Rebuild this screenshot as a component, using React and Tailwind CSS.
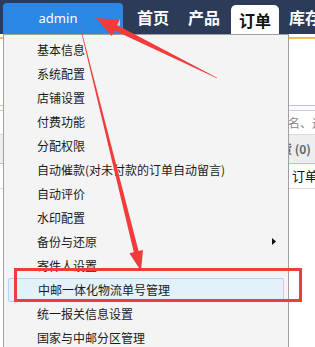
import React from "react";

const items = [
  "基本信息",
  "系统配置",
  "店铺设置",
  "付费功能",
  "分配权限",
  "自动催款(对未付款的订单自动留言)",
  "自动评价",
  "水印配置",
  "备份与还原",
  "寄件人设置",
  "中邮一体化物流单号管理",
  "统一报关信息设置",
  "国家与中邮分区管理",
];

const font = { fontFamily: '"Noto Sans CJK SC", "Noto Sans", sans-serif' };

export default function App() {
  return (
    <div className="relative w-[315px] h-[347px] overflow-hidden bg-white" style={font}>
      {/* top bar */}
      <div className="flex h-[34px] items-end overflow-hidden bg-[#2c3b58] pl-[3px]">
        <div className="relative flex h-[31px] w-[120px] shrink-0 items-center justify-center rounded-t-[4px] bg-[#2b88e4] pr-[10px] text-[13px] text-white" style={{ fontFamily: '"Noto Sans", sans-serif' }}>
          admin
          <svg className="absolute left-[110px] top-[16px]" width="7" height="7" viewBox="0 0 7 7">
            <polygon points="0,7 7,0 7,7" fill="#a9cff2" />
          </svg>
        </div>
        <div className="ml-[14px] flex shrink-0 items-end whitespace-nowrap text-[16px] font-bold text-white">
          <span className="mb-[7px] shrink-0 leading-[20px]">首页</span>
          <span className="mb-[7px] ml-[19px] shrink-0 leading-[20px]">产品</span>
          <span className="ml-[11px] flex h-[29px] w-[48px] shrink-0 items-center justify-center rounded-t-[5px] bg-white text-[#111]">订单</span>
          <span className="mb-[7px] ml-[10px] shrink-0 leading-[20px]">库存</span>
        </div>
      </div>

      {/* page content behind menu */}
      <div className="pt-[3px]">
        <div className="h-[68px] border-t-2 border-[#e8c35c]" />
        <div className="h-[5px] border-t border-[#e8c35c]" />
        <div className="flex h-[24px] items-center overflow-hidden whitespace-nowrap border-t border-[#cfcfcf] pl-[276px] text-[12px] text-[#888]">
          姓名、运单号
        </div>
        <div className="flex h-[29px] items-center overflow-hidden whitespace-nowrap border-t border-[#dcdcdc] bg-[#eeeeee] pl-[268px] text-[12px] font-bold text-[#666]">
          缺货 (0)
        </div>
        <div className="flex h-[25px] items-center overflow-hidden whitespace-nowrap border-t border-[#e8c35c] pl-[292px] text-[13px] text-[#111]">
          订单号
        </div>
        <div className="border-t border-[#dcdcdc]" />
      </div>

      {/* dropdown menu */}
      <div className="absolute left-[3px] top-[34px] z-10 h-[330px] w-[286px] border border-[#a0a0a0] bg-[#f4f4f4] pt-[3px]">
        <ul className="flex flex-col">
          {items.map((t, i) => (
            <li
              key={t}
              className={
                "relative flex h-[24px] items-center whitespace-nowrap text-[12px] text-[#1a1a1a] " +
                (i === 10
                  ? "mx-[4px] rounded-[2px] border border-[#a9d9f2] bg-[#e3f1fa] pl-[29px]"
                  : "pl-[33px]")
              }
            >
              {t}
              {i === 8 && (
                <svg className="absolute left-[268px] top-[8px]" width="4" height="7" viewBox="0 0 4 7">
                  <polygon points="0,0 4,3.5 0,7" fill="#111" />
                </svg>
              )}
            </li>
          ))}
        </ul>
      </div>

      {/* annotation: red rectangle */}
      <div className="absolute left-[14px] top-[268px] z-20 h-[34px] w-[288px] border-[3px] border-[#f23b3b]" />

      {/* annotation arrows */}
      <svg className="absolute left-0 top-0 z-30" width="315" height="347" viewBox="0 0 315 347">
        <polygon
          points="217.1,77.7 117.0,25.1 119.7,19.7 96,18 111.7,35.9 114.4,30.5 216.9,78.3"
          fill="#f23b3b"
        />
        <polygon
          points="81.3,29.9 138.6,251.0 143.0,249.9 141,271 129.4,253.3 133.8,252.2 80.7,30.1"
          fill="#f23b3b"
        />
      </svg>
    </div>
  );
}
